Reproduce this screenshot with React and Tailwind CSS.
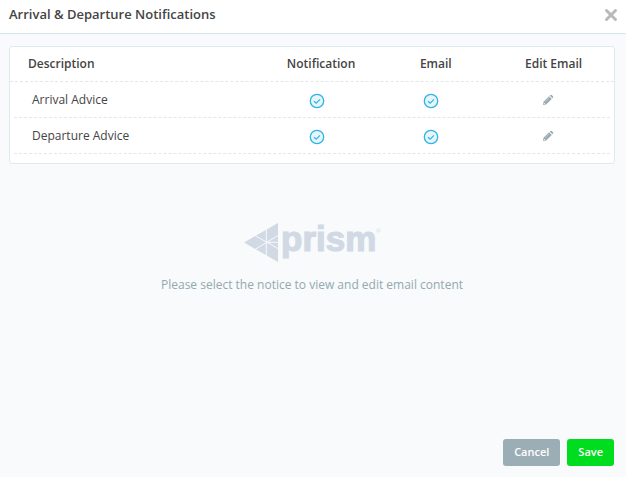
const notices = [
  { id: "arrival", name: "Arrival Advice" },
  { id: "departure", name: "Departure Advice" },
];

const headCell = "text-center font-semibold";
const checkCell = "flex items-center justify-center pr-2 pt-0.5";

function CheckToggle({ label }) {
  return (
    <button type="button" aria-label={label} aria-pressed="true" className="block">
      <svg viewBox="0 0 16 16" className="size-4" fill="none">
        <circle cx="8" cy="8" r="6.7" fill="#e6f6fd" stroke="#2fb4e6" strokeWidth="1.3" />
        <path d="M5 8.2 7.2 10.2 11 6.3" stroke="#2fb4e6" strokeWidth="1.2" />
      </svg>
    </button>
  );
}

function EditButton({ label }) {
  return (
    <button type="button" aria-label={label} className="block">
      <svg viewBox="0 0 12 12" className="size-3">
        <path d="M1 11 1.5 7.8 7.1 2.2 9.8 4.9 4.2 10.5Z" fill="#9aabb4" />
        <path d="M7.7 1.6 8.5.9Q9.1.5 9.7 1L11 2.3Q11.5 2.9 11.1 3.5L10.4 4.3Z" fill="#9aabb4" />
        <path d="M2 8.7 3.3 10 1.8 10.3 1.7 10.2Z" fill="#fff" />
        <path d="M3 7.8 7.2 3.6" stroke="#c8d2d8" strokeWidth=".7" />
      </svg>
    </button>
  );
}

function PrismLogo() {
  return (
    <svg viewBox="0 0 138 44" className="h-11 w-[138px] overflow-visible" role="img" aria-label="prism">
      <path d="M1 22.5 35 3V42Z" fill="#d1d9e5" />
      <path
        d="M12 15.5 35 28.5M12 29.5 35 15.5M23.3 9V36M23.3 22.3H35"
        stroke="#f8fafc"
        strokeWidth="1"
        fill="none"
      />
      <text
        x="38"
        y="31"
        fontSize="35"
        fontWeight="700"
        fill="#d1d9e5"
        stroke="#d1d9e5"
        strokeWidth="1.2"
        className="font-['Liberation_Sans',Arial,sans-serif]"
      >
        prism
      </text>
      <circle cx="135.5" cy="10.5" r="1.6" fill="none" stroke="#dde3ec" strokeWidth="1" />
    </svg>
  );
}

export default function App() {
  return (
    <div className="flex min-h-screen flex-col bg-[#f8fafc] font-['Open_Sans','Noto_Sans',sans-serif] text-xs text-[#444]">
      <header className="flex h-[34px] items-center justify-between border-b border-[#d3e6e8] bg-white pr-2 pb-1 pl-[9px]">
        <h1 className="text-[13px] font-semibold">Arrival &amp; Departure Notifications</h1>
        <button type="button" aria-label="Close" className="block">
          <svg viewBox="0 0 14 14" className="size-3.5" fill="none">
            <path d="M2.5 2.5 11.5 11.5M11.5 2.5 2.5 11.5" stroke="#b9b9b9" strokeWidth="3" strokeLinecap="round" />
          </svg>
        </button>
      </header>

      <main className="flex flex-1 flex-col pt-3 pr-[11px] pb-[11px] pl-[9px]">
        <table className="block rounded-[3px] border border-[#deebee] bg-white pb-[9px]">
          <thead className="block">
            <tr className="grid h-[35px] grid-cols-[42%_19%_19%_20%] items-center border-b border-dashed border-[#e2e8e9]">
              <th scope="col" className="pl-[18px] text-left font-semibold">Description</th>
              <th scope="col" className={headCell}>Notification</th>
              <th scope="col" className={headCell}>Email</th>
              <th scope="col" className={headCell}>Edit Email</th>
            </tr>
          </thead>
          <tbody className="block px-1">
            {notices.map((n) => (
              <tr
                key={n.id}
                className="grid h-9 grid-cols-[42%_19%_19%_20%] items-center border-b border-dashed border-[#e2e8e9]"
              >
                <td className="pl-[18px]">{n.name}</td>
                <td className={checkCell}>
                  <CheckToggle label={`${n.name} notification`} />
                </td>
                <td className="flex items-center justify-center pr-1.5 pt-0.5">
                  <CheckToggle label={`${n.name} email`} />
                </td>
                <td className="flex items-center justify-center pr-1">
                  <EditButton label={`Edit ${n.name} email`} />
                </td>
              </tr>
            ))}
          </tbody>
        </table>

        <section className="flex flex-1 flex-col items-center gap-[13px] pt-14">
          <PrismLogo />
          <p className="text-[#93a9b0]">Please select the notice to view and edit email content</p>
        </section>

        <footer className="flex justify-end gap-[7px] pr-px text-[11px] font-semibold text-white">
          <button type="button" className="h-[27px] rounded-[3px] bg-[#9badb5] px-[11px]">Cancel</button>
          <button type="button" className="h-[27px] rounded-[3px] bg-[#00dc1e] px-[11px]">Save</button>
        </footer>
      </main>
    </div>
  );
}
